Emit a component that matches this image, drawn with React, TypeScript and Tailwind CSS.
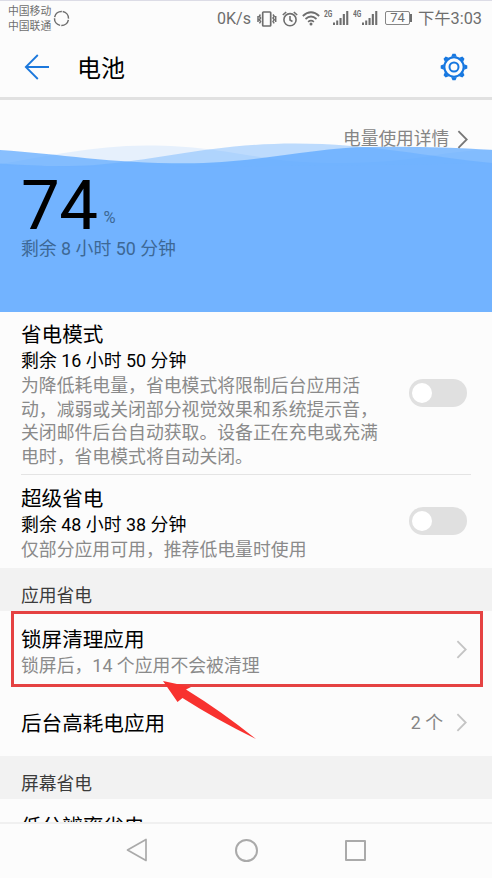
import type { ReactNode } from "react";

function Chevron({ className }: { className: string }) {
  return (
    <svg width="12" height="19" viewBox="0 0 12 19" fill="none" strokeWidth="1.8" className={className}>
      <path d="M1.4 1.2L9.7 9.5L1.4 17.8" stroke="currentColor" />
    </svg>
  );
}

function Signal({ label }: { label: string }) {
  return (
    <div className="flex h-4 w-[25px] items-start">
      <span className="w-[8.5px] origin-left scale-x-[0.78] text-[8.5px] leading-[8px] font-bold">{label}</span>
      <svg width="16" height="16" viewBox="0 0 16 16" fill="currentColor" className="shrink-0">
        <path d="M0 12.5h2V15H0zM3.2 10.5h2V15h-2zM6.5 8h2.1v7H6.5zM9.8 4h2.1v11H9.8zM13.2 1h2.1v14h-2.1z" />
      </svg>
    </div>
  );
}

function StatusBar() {
  return (
    <div className="flex h-9 shrink-0 items-center border-t border-[#dcdce6] text-[#6e6e6e]">
      <div className="ml-2 w-[44px] text-[10.8px] leading-[15px] whitespace-nowrap">
        <div>中国移动</div>
        <div>中国联通</div>
      </div>
      <svg width="17" height="17" viewBox="0 0 17 17" fill="none" stroke="currentColor" strokeWidth="1.5" className="ml-[1px]">
        <circle cx="8.5" cy="8.5" r="7" strokeDasharray="9.8 1.2" transform="rotate(-80 8.5 8.5)" />
      </svg>
      <div className="ml-[147px] w-[36px] text-[16px] leading-5 whitespace-nowrap">0K/s</div>
      <svg width="20" height="16" viewBox="0 0 20 16" fill="none" stroke="currentColor" className="ml-[4px]">
        <rect x="5.7" y="1" width="8" height="14" rx="0.8" strokeWidth="1.7" />
        <path d="M3.4 3.5L2.4 5.2L3.6 7L2.4 8.8L3.6 10.6L2.4 12.4M1 5v6M16 3.5l1.2 1.7L16 7l1.2 1.8L16 10.6l1.2 1.8M18.7 5v6" strokeWidth="1.5" />
      </svg>
      <svg width="16" height="16" viewBox="0 0 16 16" fill="none" stroke="currentColor" strokeWidth="1.6" className="ml-[5px]">
        <circle cx="8" cy="8.7" r="6.1" />
        <path d="M8 5v4l2.5 1.5M.8 4L4.2 1M15.2 4l-3.4-3" />
      </svg>
      <svg width="18" height="15" viewBox="0 0 18 15" fill="none" stroke="currentColor" strokeWidth="1.7" className="ml-[4px]">
        <path d="M.8 5Q9-2.5 17.2 5M3.5 8Q9 3 14.5 8M6.1 10.8Q9 8.4 11.9 10.8" />
        <circle cx="9" cy="13" r="1.5" fill="currentColor" stroke="none" />
      </svg>
      <div className="ml-[4px] flex gap-1 pb-0.5">
        <Signal label="2G" />
        <Signal label="4G" />
      </div>
      <div className="ml-[7px] flex items-center pb-0.5">
        <div className="flex h-[14px] w-[25px] items-center justify-center rounded-[2px] border border-[#858585] text-[13px] leading-none">74</div>
        <div className="h-2 w-[2px] bg-[#6e6e6e]" />
      </div>
      <div className="ml-[6px] text-[16.3px] leading-5 whitespace-nowrap">下午3:03</div>
    </div>
  );
}

function Header() {
  return (
    <header className="flex h-[61px] shrink-0 items-center pl-6">
      <svg width="26" height="26" viewBox="0 0 26 26" fill="none" stroke="#1c78dc" strokeWidth="1.8">
        <path d="M13.8 1L1.8 13L13.8 25M2 13h23" />
      </svg>
      <h1 className="ml-[27px] pt-1 text-[24px] leading-8 text-black">电池</h1>
      <svg width="28" height="28" viewBox="-14 -14 28 28" fill="none" stroke="#1677e0" className="mr-6 ml-auto">
        <circle r="9.7" strokeWidth="2.1" />
        <circle r="4.5" strokeWidth="2" />
        {[0, 45, 90, 135, 180, 225, 270, 315].map((angle) => (
          <path key={angle} d="M-2.8-10.2L-1.5-13.3H1.5L2.8-10.2Z" fill="#1677e0" stroke="none" transform={`rotate(${angle})`} />
        ))}
      </svg>
    </header>
  );
}

function Hero() {
  return (
    <section className="relative h-[212px] shrink-0 border-t-[3px] border-[#e1e1e1]">
      <svg width="492" height="212" viewBox="0 100 492 212" fill="#57a5ff" className="absolute inset-x-0 top-0">
        <path opacity=".13" d="M0 164C50 156 90 146 147 145.5C205 145.5 240 155 285 160.5C330 165 385 163 430 156C455 152 475 150 492 149V312H0Z" />
        <path opacity=".38" d="M0 163.5C30 166 65 167 95 165C160 160 215 143.5 295 143.5C370 143.5 430 157 492 163V312H0Z" />
        <path opacity=".7" d="M0 150C60 154 110 163.3 185 163.3C260 163 315 147 370 147C410 146.5 450 147 492 150V312H0Z" />
        <path d="M0 165C100 168 360 166 492 163V312H0Z" fill="#72b3ff" />
      </svg>
      <div className="relative flex items-center pt-[27px] pl-[343px] text-[#858585]">
        <span className="w-[114px] text-[17.7px] leading-[25px] whitespace-nowrap">电量使用详情</span>
        <Chevron className="text-[#777]" />
      </div>
      <div className="relative mt-[19px] ml-[21px] flex h-[66px] items-start text-black">
        <span className="text-[69px] leading-[70px] tracking-[-0.5px]">74</span>
        <span className="mt-[35px] ml-[6px] text-[16.5px] leading-6 text-[#3d6895]">%</span>
      </div>
      <div className="relative ml-[21px] text-[17.85px] leading-6 text-[#3d6895]">剩余 8 小时 50 分钟</div>
    </section>
  );
}

function Switch() {
  return (
    <div className="mr-[25px] ml-auto flex h-7 w-[58px] shrink-0 items-center rounded-full bg-[#e0e0e0] pl-[3px]">
      <div className="size-5 rounded-full bg-white" />
    </div>
  );
}

function ModeText({ title, remaining, children }: { title: string; remaining: string; children: ReactNode }) {
  return (
    <div className="whitespace-nowrap">
      <div className="text-[20.6px] leading-[26px] text-black">{title}</div>
      <div className="text-[17.9px] leading-[25px] text-black">{remaining}</div>
      <div className="pt-px text-[17.85px] leading-[23.5px] text-[#8a8a8a]">{children}</div>
    </div>
  );
}

function SectionTitle({ children }: { children: ReactNode }) {
  return <div className="flex h-[43px] shrink-0 items-center bg-[#f2f2f2] pt-[12px] pl-[21px] text-[17.8px] leading-6 text-[#3c3c3c]">{children}</div>;
}

export default function App() {
  return (
    <main className="relative flex h-[878px] w-[492px] flex-col overflow-hidden bg-[#fcfcfc] font-['Roboto','Noto_Sans_CJK_SC',sans-serif]">
      <StatusBar />
      <Header />
      <div className="flex h-[725px] shrink-0 flex-col overflow-hidden">
        <Hero />
        <div className="flex h-[165px] shrink-0 items-start pl-[21px]">
          <div className="pt-[13px]">
            <ModeText title="省电模式" remaining="剩余 16 小时 50 分钟">
              为降低耗电量，省电模式将限制后台应用活<br />
              动，减弱或关闭部分视觉效果和系统提示音，<br />
              关闭邮件后台自动获取。设备正在充电或充满<br />
              电时，省电模式将自动关闭。
            </ModeText>
          </div>
          <div className="ml-auto pt-[70px]">
            <Switch />
          </div>
        </div>
        <div className="mr-[21px] ml-[21px] h-px shrink-0 bg-[#e4e4e4]" />
        <div className="flex h-[93px] shrink-0 items-start pl-[21px]">
          <div className="pt-[11px]">
            <ModeText title="超级省电" remaining="剩余 48 小时 38 分钟">仅部分应用可用，推荐低电量时使用</ModeText>
          </div>
          <div className="ml-auto pt-8">
            <Switch />
          </div>
        </div>
        <SectionTitle>应用省电</SectionTitle>
        <div className="mr-[9px] ml-[11px] flex h-[76px] shrink-0 items-center border-[3px] border-[#e54242] pr-3 pl-[7px]">
          <div className="pt-[5px]">
            <div className="text-[20.6px] leading-[28px] text-black">锁屏清理应用</div>
            <div className="text-[17.85px] leading-6 text-[#8a8a8a]">锁屏后，14 个应用不会被清理</div>
          </div>
          <Chevron className="ml-auto text-[#c4c4c4]" />
        </div>
        <div className="flex h-[69px] shrink-0 items-center pt-[2px] pr-6 pl-[21px]">
          <div className="pt-[3px] text-[20.6px] leading-7 text-black">后台高耗电应用</div>
          <div className="mr-[13px] ml-auto pt-px text-[17.85px] leading-6 text-[#858585]">2 个</div>
          <Chevron className="text-[#c4c4c4]" />
        </div>
        <SectionTitle>屏幕省电</SectionTitle>
        <div className="shrink-0 pt-[14px] pl-[21px] text-[20.6px] leading-7 text-black">低分辨率省电</div>
      </div>
      <nav className="flex h-14 shrink-0 items-center justify-center gap-[86px] border-t-2 border-[#f0f0f0] pr-[2px] pb-0.5">
        <svg width="24" height="24" viewBox="0 0 24 24" fill="none" stroke="#aaa" strokeWidth="1.7" strokeLinejoin="round">
          <path d="M21 1.5V22.5L2.5 12Z" />
        </svg>
        <div className="size-[23px] rounded-full border-2 border-[#aaa]" />
        <div className="ml-px size-[21px] rounded-[1px] border-2 border-[#aaa]" />
      </nav>
      <svg width="94" height="60" viewBox="0 0 94 60" className="absolute top-[680px] left-[163px]">
        <path d="M0 1L28 7L23 9.5Q58 31 93 59Q54 40 19.5 18L14.5 22Z" fill="#f8322f" />
      </svg>
    </main>
  );
}
